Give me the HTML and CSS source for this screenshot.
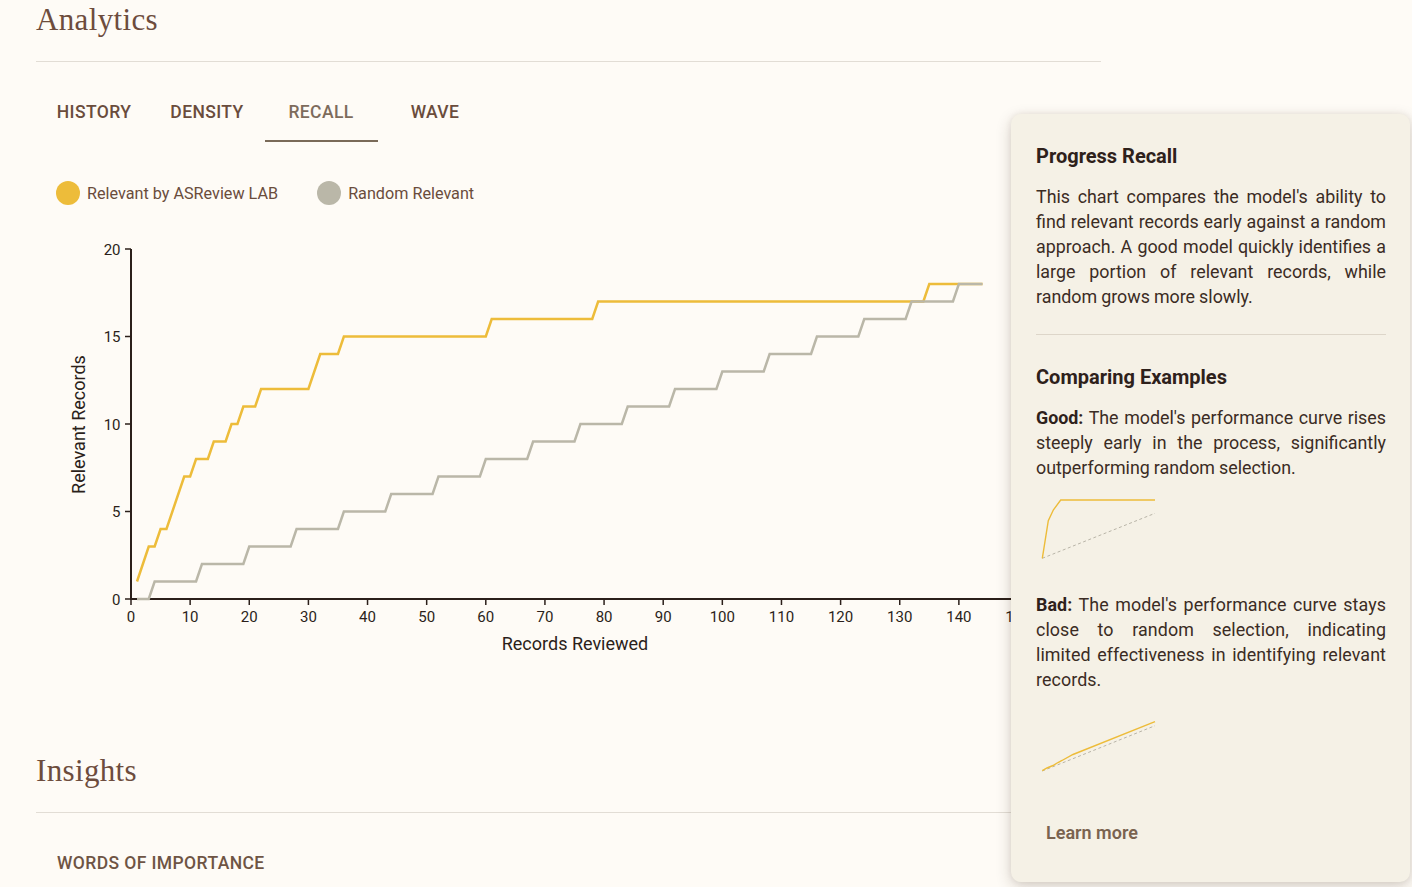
FILE: index.html
```html
<!DOCTYPE html>
<html lang="en">
<head>
<meta charset="utf-8">
<title>Analytics</title>
<link rel="stylesheet" href="styles.css">
</head>
<body>
<main class="page">
  <section class="section">
    <h2 class="section-title">Analytics</h2>
    <div class="divider"></div>
    <nav class="tabs">
      <div class="tab tab-first">History</div>
      <div class="tab">Density</div>
      <div class="tab tab-active">Recall</div>
      <div class="tab">Wave</div>
    </nav>
    <div class="legend">
      <div class="legend-item"><span class="dot dot-yellow"></span><span>Relevant by ASReview LAB</span></div>
      <div class="legend-item"><span class="dot dot-gray"></span><span>Random Relevant</span></div>
    </div>
    <svg class="chart" width="1000" height="440" viewBox="36 230 1000 440">
      <g class="axis">
        <line x1="131" y1="249" x2="131" y2="600" class="axis-line"/>
        <line x1="130" y1="599" x2="1018" y2="599" class="axis-line"/>
        <g class="ticks">
          <line x1="125" y1="599" x2="131" y2="599"/>
          <line x1="125" y1="511.5" x2="131" y2="511.5"/>
          <line x1="125" y1="424" x2="131" y2="424"/>
          <line x1="125" y1="336.5" x2="131" y2="336.5"/>
          <line x1="125" y1="249" x2="131" y2="249"/>
          <line x1="131" y1="599" x2="131" y2="605"/>
          <line x1="190.13" y1="599" x2="190.13" y2="605"/>
          <line x1="249.27" y1="599" x2="249.27" y2="605"/>
          <line x1="308.4" y1="599" x2="308.4" y2="605"/>
          <line x1="367.53" y1="599" x2="367.53" y2="605"/>
          <line x1="426.67" y1="599" x2="426.67" y2="605"/>
          <line x1="485.8" y1="599" x2="485.8" y2="605"/>
          <line x1="544.93" y1="599" x2="544.93" y2="605"/>
          <line x1="604.07" y1="599" x2="604.07" y2="605"/>
          <line x1="663.2" y1="599" x2="663.2" y2="605"/>
          <line x1="722.33" y1="599" x2="722.33" y2="605"/>
          <line x1="781.47" y1="599" x2="781.47" y2="605"/>
          <line x1="840.6" y1="599" x2="840.6" y2="605"/>
          <line x1="899.73" y1="599" x2="899.73" y2="605"/>
          <line x1="958.87" y1="599" x2="958.87" y2="605"/>
          <line x1="1018" y1="599" x2="1018" y2="605"/>
        </g>
        <g class="ylabels">
          <text x="120.5" y="604.5">0</text>
          <text x="120.5" y="517">5</text>
          <text x="120.5" y="429.5">10</text>
          <text x="120.5" y="342">15</text>
          <text x="120.5" y="254.5">20</text>
        </g>
        <g class="xlabels">
          <text x="131" y="621.5">0</text>
          <text x="190.13" y="621.5">10</text>
          <text x="249.27" y="621.5">20</text>
          <text x="308.4" y="621.5">30</text>
          <text x="367.53" y="621.5">40</text>
          <text x="426.67" y="621.5">50</text>
          <text x="485.8" y="621.5">60</text>
          <text x="544.93" y="621.5">70</text>
          <text x="604.07" y="621.5">80</text>
          <text x="663.2" y="621.5">90</text>
          <text x="722.33" y="621.5">100</text>
          <text x="781.47" y="621.5">110</text>
          <text x="840.6" y="621.5">120</text>
          <text x="899.73" y="621.5">130</text>
          <text x="958.87" y="621.5">140</text>
          <text x="1018" y="621.5">150</text>
        </g>
        <text class="axis-title" x="575" y="649.5">Records Reviewed</text>
        <text class="axis-title" x="0" y="0" transform="translate(84.5 424.5) rotate(-90)">Relevant Records</text>
      </g>
      <path class="line-yellow" d="M137.01 581.5 L148.74 546.5 L154.65 546.5 L160.57 529 L166.48 529 L184.22 476.5 L190.13 476.5 L196.05 459 L207.87 459 L213.79 441.5 L225.61 441.5 L231.53 424 L237.44 424 L243.35 406.5 L255.18 406.5 L261.09 389 L308.4 389 L320.23 354 L337.97 354 L343.88 336.5 L485.8 336.5 L491.71 319 L592.24 319 L598.15 301.5 L923.38 301.5 L929.3 284 L982.52 284"/>
      <path class="line-gray" d="M137.01 599 L148.74 599 L154.65 581.5 L196.05 581.5 L201.96 564 L243.35 564 L249.27 546.5 L290.66 546.5 L296.57 529 L337.97 529 L343.88 511.5 L385.27 511.5 L391.19 494 L432.58 494 L438.49 476.5 L479.88 476.5 L485.8 459 L527.19 459 L533.1 441.5 L574.5 441.5 L580.41 424 L621.8 424 L627.72 406.5 L669.11 406.5 L675.02 389 L716.42 389 L722.33 371.5 L763.72 371.5 L769.64 354 L811.03 354 L816.94 336.5 L858.34 336.5 L864.25 319 L905.64 319 L911.56 301.5 L952.95 301.5 L958.86 284 L982.52 284"/>
    </svg>
  </section>
  <section class="section section-insights">
    <h2 class="section-title">Insights</h2>
    <div class="divider"></div>
    <nav class="tabs">
      <div class="tab tab-wide">Words of importance</div>
    </nav>
  </section>
</main>

<aside class="popover">
  <h3 class="pop-title">Progress Recall</h3>
  <p class="pop-text">This chart compares the model's ability to find relevant records early against a random approach. A good model quickly identifies a large portion of relevant records, while random grows more slowly.</p>
  <div class="pop-divider"></div>
  <h3 class="pop-title pop-title-2">Comparing Examples</h3>
  <p class="pop-text"><strong>Good:</strong> The model's performance curve rises steeply early in the process, significantly outperforming random selection.</p>
  <svg class="mini" width="125" height="65" viewBox="1036 495 125 65">
    <line x1="1042.3" y1="558.3" x2="1155" y2="513.3" class="mini-dash"/>
    <polyline points="1042.3,558.3 1048.3,520.7 1053.3,510 1060.7,500 1155,500" class="mini-line"/>
  </svg>
  <p class="pop-text pop-text-bad"><strong>Bad:</strong> The model's performance curve stays close to random selection, indicating limited effectiveness in identifying relevant records.</p>
  <svg class="mini" width="125" height="65" viewBox="1036 708 125 65">
    <line x1="1042.3" y1="772" x2="1155" y2="726.7" class="mini-dash"/>
    <polyline points="1042.3,771.7 1047,769 1053,766.5 1058,763.5 1062,761.5 1073,755.5 1155,722.7" class="mini-line"/>
  </svg>
  <button class="learn-more" type="button">Learn more</button>
</aside>
</body>
</html>
```

FILE: styles.css
```css
* { box-sizing: border-box; }

html, body {
  margin: 0;
  padding: 0;
  background: #fefbf6;
}

body {
  font-family: Roboto, "Liberation Sans", sans-serif;
  color: #3b2c24;
  width: 1412px;
  height: 887px;
  overflow: hidden;
  position: relative;
}

.page {
  padding-left: 36px;
  width: 1101px;
}

.section-title {
  margin: 0;
  font-family: "Liberation Serif", "DejaVu Serif", serif;
  font-weight: 400;
  font-size: 31px;
  line-height: 40px;
  color: #6d4c3d;
  letter-spacing: 0.35px;
}

.divider {
  margin-top: 21px;
  height: 1px;
  background: #e2ddd5;
}

.tabs {
  display: flex;
  margin-top: 24px;
  height: 56px;
}

.tab {
  position: relative;
  width: 114px;
  height: 56px;
  display: flex;
  align-items: center;
  justify-content: center;
  padding-bottom: 4px;
  font-size: 17.5px;
  font-weight: 500;
  letter-spacing: 0.4px;
  text-transform: uppercase;
  color: #6a4c3c;
}

.tab-first {
  padding-left: 2px;
}

.tab-active {
  color: #7d6b5c;
}

.tab-active::after {
  content: "";
  position: absolute;
  left: 1px;
  right: 0;
  bottom: 0;
  height: 2px;
  background: #7a6a58;
}

.tab-wide {
  width: auto;
  padding: 0 21px 4px;
  color: #6e5444;
}

.legend {
  display: flex;
  align-items: center;
  gap: 39px;
  margin-top: 39px;
  padding-left: 20px;
  height: 24px;
}

.legend-item {
  display: flex;
  align-items: center;
  gap: 7px;
  font-size: 16.2px;
  color: #6a4c3c;
}

.dot {
  width: 24px;
  height: 24px;
  border-radius: 50%;
  display: inline-block;
}

.dot-yellow { background: #edbc3a; }
.dot-gray { background: #bab7a8; }

.chart {
  display: block;
  margin-top: 25px;
  overflow: visible;
}

.axis-line {
  stroke: #2b1f1a;
  stroke-width: 2;
}

.ticks line {
  stroke: #2b1f1a;
  stroke-width: 1.5;
}

.ylabels text {
  font-family: Roboto, "Liberation Sans", sans-serif;
  font-size: 15px;
  fill: #2b1f1a;
  text-anchor: end;
}

.xlabels text {
  font-family: Roboto, "Liberation Sans", sans-serif;
  font-size: 15px;
  fill: #2b1f1a;
  text-anchor: middle;
}

.axis-title {
  font-family: Roboto, "Liberation Sans", sans-serif;
  font-size: 18px;
  fill: #2b1f1a;
  text-anchor: middle;
}

.line-yellow {
  fill: none;
  stroke: #edbc3a;
  stroke-width: 2.5;
  stroke-linejoin: miter;
}

.line-gray {
  fill: none;
  stroke: #bab7a8;
  stroke-width: 2.5;
  stroke-linejoin: miter;
}

.section-insights {
  margin-top: 81px;
}

.popover {
  position: absolute;
  left: 1011px;
  top: 114px;
  width: 399px;
  height: 768px;
  padding: 30px 24px 31px 25px;
  background: #f5f1e6;
  border-radius: 10px;
  box-shadow: 0 5px 16px rgba(60, 40, 20, 0.2), 0 0 6px rgba(60, 40, 20, 0.08);
  display: flex;
  flex-direction: column;
  align-items: flex-start;
}

.pop-title {
  margin: 0;
  font-size: 20px;
  line-height: 24px;
  font-weight: 700;
  color: #2e211b;
}

.pop-text {
  margin: 16px 0 0;
  font-size: 17.85px;
  line-height: 25px;
  word-spacing: -0.4px;
  text-align: justify;
  color: #3b2c24;
  width: 100%;
}

.pop-text strong {
  font-weight: 700;
  color: #2e211b;
}

.pop-divider {
  margin-top: 25px;
  height: 1px;
  width: 100%;
  background: #ddd6c9;
}

.pop-title-2 {
  margin-top: 30px;
}

.mini {
  display: block;
  margin-top: 15px;
  margin-left: 0;
  overflow: visible;
}

.mini-line {
  fill: none;
  stroke: #edbc3a;
  stroke-width: 1.4;
}

.mini-dash {
  stroke: #b9b5a8;
  stroke-width: 1;
  stroke-dasharray: 3 2.5;
}

.pop-text-bad {
  margin-top: 32px;
  word-spacing: 0;
  letter-spacing: 0.08px;
}

.learn-more {
  margin-top: 42px;
  height: 36px;
  padding: 0 10px;
  border: none;
  background: transparent;
  font-family: Roboto, "Liberation Sans", sans-serif;
  font-size: 18px;
  font-weight: 600;
  color: #7a6350;
  cursor: pointer;
}
```
